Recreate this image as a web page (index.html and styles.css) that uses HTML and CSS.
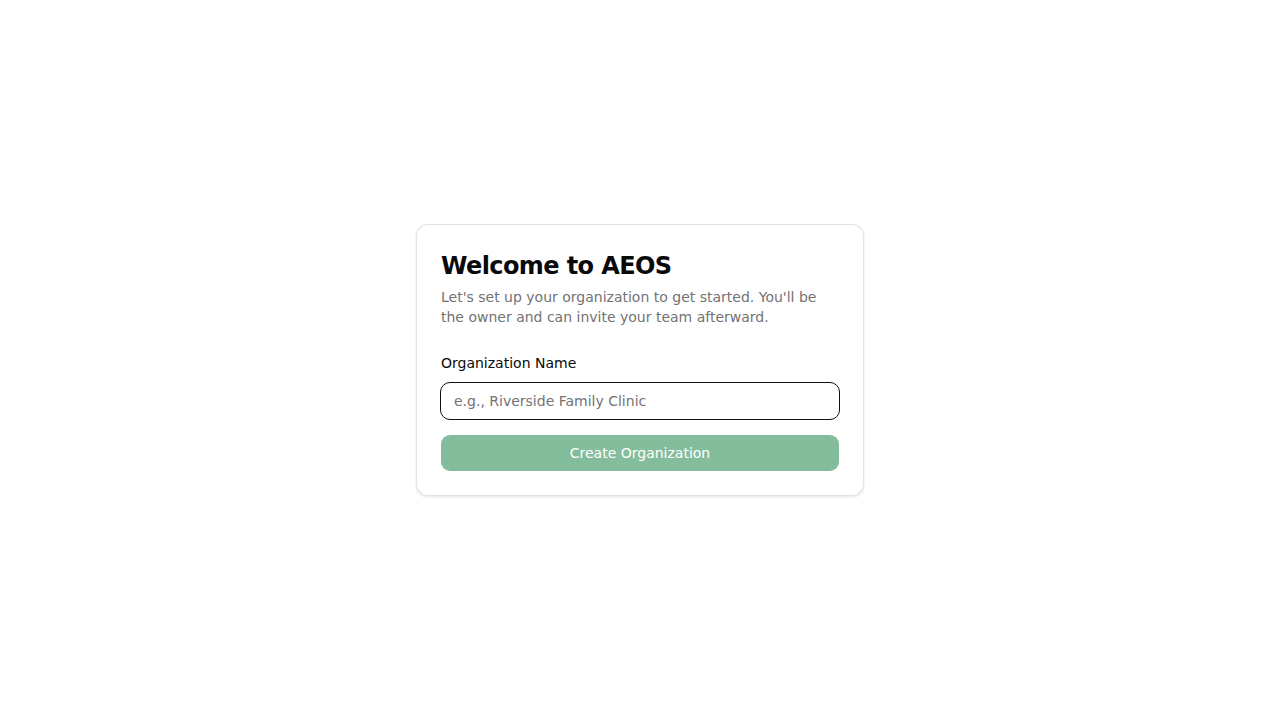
FILE: index.html
```html
<!DOCTYPE html>
<html lang="en">
<head>
<meta charset="utf-8">
<title>Welcome to AEOS</title>
<link rel="stylesheet" href="styles.css">
</head>
<body>
<main class="page">
  <section class="card">
    <h1 class="title">Welcome to AEOS</h1>
    <p class="desc">Let's set up your organization to get started. You'll be the owner and can invite your team afterward.</p>
    <form class="form">
      <label class="label" for="org">Organization Name</label>
      <input class="input" id="org" type="text" placeholder="e.g., Riverside Family Clinic">
      <button class="btn" type="button">Create Organization</button>
    </form>
  </section>
</main>
</body>
</html>
```

FILE: styles.css
```css
* { box-sizing: border-box; }
html, body { margin: 0; padding: 0; background: #ffffff; }
body {
  font-family: "DejaVu Sans", sans-serif;
  color: #0a0a0a;
}
.page {
  min-height: 720px;
  display: flex;
  align-items: center;
  justify-content: center;
}
.card {
  width: 448px;
  border: 1px solid #e2e2e2;
  border-radius: 12px;
  background: #fff;
  box-shadow: 0 1px 3px rgba(0,0,0,0.08), 0 1px 2px rgba(0,0,0,0.04);
  padding: 24px;
}
.title {
  margin: 0;
  font-size: 24px;
  line-height: 34px;
  font-weight: 700;
  letter-spacing: -0.025em;
  color: #0a0a0a;
}
.desc {
  margin: 4px 0 0;
  font-size: 14px;
  line-height: 20px;
  color: #737373;
}
.form {
  margin-top: 26px;
  display: flex;
  flex-direction: column;
}
.label {
  font-size: 14px;
  line-height: 20px;
  color: #0a0a0a;
}
.input {
  margin: 9px -1px 0;
  width: calc(100% + 2px);
  height: 38px;
  border: 1px solid #111;
  border-radius: 10px;
  padding: 0 13px;
  font-family: "DejaVu Sans", sans-serif;
  font-size: 14px;
  color: #0a0a0a;
  background: #fff;
  outline: none;
}
.input::placeholder { color: #737373; }
.btn {
  margin-top: 15px;
  height: 36px;
  border: none;
  border-radius: 9px;
  background: #84bd9c;
  color: #ffffff;
  font-family: "DejaVu Sans", sans-serif;
  font-size: 14px;
}
```
